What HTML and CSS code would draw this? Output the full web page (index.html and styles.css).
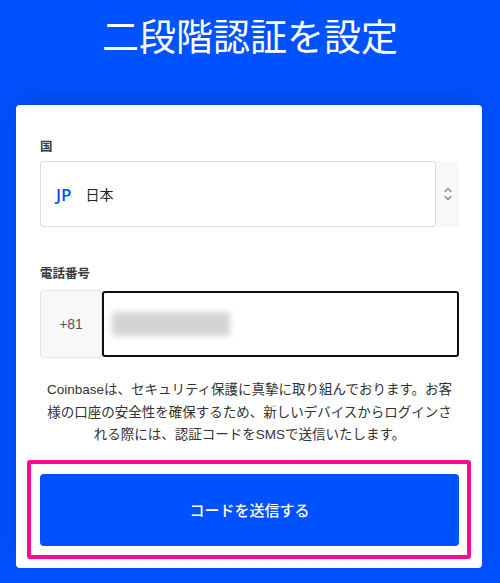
FILE: index.html
```html
<!DOCTYPE html>
<html lang="ja">
<head>
    <meta charset="UTF-8">
    <meta name="viewport" content="width=device-width, initial-scale=1.0">
    <title>二段階認証を設定</title>
    <link rel="stylesheet" href="styles.css">
</head>
<body>
    <!-- Header -->
    <div class="header">
        <h1>二段階認証を設定</h1>
    </div>

    <!-- Card -->
    <div class="card">
        <label class="field-label">国</label>
        <div class="select-row">
            <div class="select-box">
                <span class="country-code">JP</span>
                <span class="country-name">日本</span>
            </div>
            <div class="select-arrow">
                <svg width="10" height="16" viewBox="0 0 10 16">
                    <path d="M2 5.5 L5 2.5 L8 5.5" fill="none" stroke="#8a8f99" stroke-width="1.4" stroke-linecap="round" stroke-linejoin="round"/>
                    <path d="M2 10.5 L5 13.5 L8 10.5" fill="none" stroke="#8a8f99" stroke-width="1.4" stroke-linecap="round" stroke-linejoin="round"/>
                </svg>
            </div>
        </div>

        <label class="field-label phone-label">電話番号</label>
        <div class="phone-row">
            <div class="prefix">+81</div>
            <div class="phone-input">
                <div class="blurred"></div>
            </div>
        </div>

        <p class="notice">Coinbaseは、セキュリティ保護に真摯に取り組んでおります。お客<br>様の口座の安全性を確保するため、新しいデバイスからログインさ<br>れる際には、認証コードをSMSで送信いたします。</p>

        <div class="highlight">
            <button class="send-btn">コードを送信する</button>
        </div>
    </div>
</body>
</html>
```

FILE: styles.css
```css
* {
    margin: 0;
    padding: 0;
    box-sizing: border-box;
}
body {
    font-family: "Liberation Sans", "Noto Sans CJK JP", sans-serif;
    background: #0052ff;
    color: #333;
    overflow: hidden;
}

/* Header */
.header {
    height: 105px;
    padding-top: 17px;
    text-align: center;
}
.header h1 {
    font-family: "Noto Sans CJK JP", sans-serif;
    font-size: 37px;
    font-weight: 400;
    line-height: 36px;
    color: #fff;
}

/* Card */
.card {
    margin: 0 18px 0 16px;
    background: #fff;
    border-radius: 4px;
    padding: 33px 23px 9px 24px;
    box-shadow: 0 -8px 28px rgba(0, 20, 90, 0.18);
}
.field-label {
    display: block;
    font-family: "Noto Sans CJK JP", sans-serif;
    font-size: 12.5px;
    font-weight: 700;
    line-height: 16px;
    color: #3a3a3a;
    margin-bottom: 7px;
}
.phone-label {
    margin-top: 38px;
    margin-bottom: 9px;
}

/* Country select */
.select-row {
    display: flex;
    height: 66px;
}
.select-box {
    width: 396px;
    display: flex;
    align-items: center;
    gap: 14px;
    padding-left: 15px;
    border: 1px solid #dcdde0;
    border-radius: 3px;
}
.country-code {
    font-family: "Open Sans", sans-serif;
    font-size: 17px;
    font-weight: 600;
    color: #0052ff;
}
.country-name {
    font-family: "Noto Sans CJK JP", sans-serif;
    font-size: 14px;
    color: #222;
}
.select-arrow {
    flex: 1;
    display: flex;
    align-items: center;
    justify-content: center;
    background: #f8f8f9;
    border-radius: 0 3px 3px 0;
}

/* Phone */
.phone-row {
    display: flex;
    height: 68px;
}
.prefix {
    width: 62px;
    display: flex;
    align-items: center;
    justify-content: center;
    background: #f8f8f9;
    border: 1px solid #e4e5e8;
    border-radius: 3px;
    font-size: 14px;
    color: #555;
}
.phone-input {
    flex: 1;
    margin: 1px 0 1px 0;
    border: 2px solid #111;
    border-radius: 3px;
    display: flex;
    align-items: center;
    padding-left: 8px;
}
.blurred {
    width: 118px;
    height: 24px;
    background: #d4d4d4;
    filter: blur(3px);
}

/* Notice */
.notice {
    margin-top: 21px;
    font-family: "Liberation Sans", "Noto Sans CJK JP", sans-serif;
    font-size: 13.5px;
    line-height: 22.5px;
    text-align: center;
    color: #333;
}

/* Button */
.highlight {
    margin: 13px -12px 0 -13px;
    padding: 10px 8px 9px 9px;
    border: 4px solid #fa0c8c;
    border-radius: 3px;
}
.send-btn {
    display: block;
    width: 100%;
    height: 72px;
    background: #0052ff;
    border: none;
    border-radius: 4px;
    color: #fff;
    font-family: "Noto Sans CJK JP", sans-serif;
    font-size: 15px;
    font-weight: 500;
    cursor: pointer;
}
```
